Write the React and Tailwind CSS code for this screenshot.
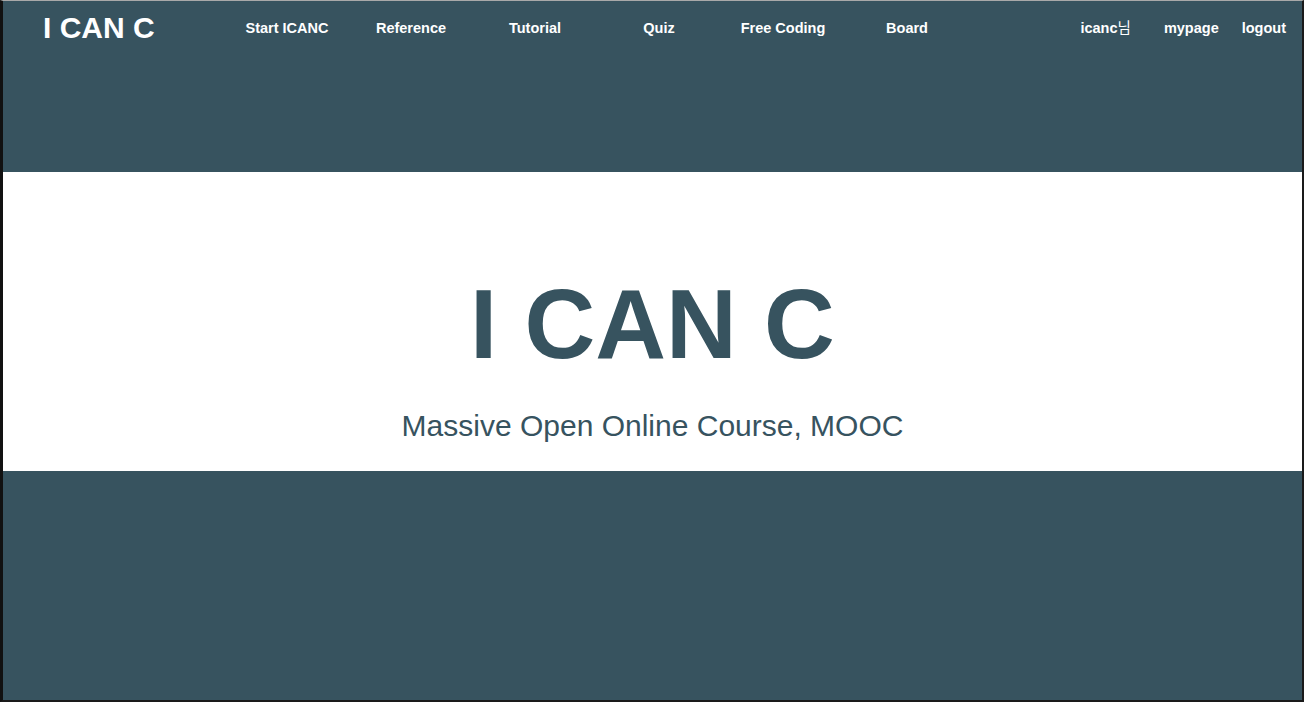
import React from 'react';

const navItems = ['Start ICANC', 'Reference', 'Tutorial', 'Quiz', 'Free Coding', 'Board'];

const App = () => {
  return (
    <div
      className="w-[1304px] h-[702px] flex flex-col bg-[#37535f] border-t border-t-[#a9a9a9] border-l-[3px] border-r-[2px] border-b-[2px] border-l-[#111111] border-r-[#1a1a1a] border-b-[#1a1a1a] overflow-hidden"
      style={{ fontFamily: '"Liberation Sans", Arial, "Noto Sans CJK KR", sans-serif' }}
    >
      {/* HEADER */}
      <header className="h-[171px] shrink-0 bg-[#37535f]">
        <div className="h-[53px] flex items-center">
          <div className="w-[222px] pl-[40px] text-white text-[30px] font-bold leading-none">I CAN C</div>

          <nav className="flex pt-[2px]">
            {navItems.map((item) => (
              <a key={item} className="w-[124px] text-center text-white text-[14.5px] font-bold cursor-pointer">
                {item}
              </a>
            ))}
          </nav>

          <div className="ml-auto flex items-center pt-[2px] pr-[16px] text-white text-[14.5px] font-bold">
            <span>
              icanc<span className="font-normal">님</span>
            </span>
            <a className="ml-[33px] cursor-pointer">mypage</a>
            <a className="ml-[23px] cursor-pointer">logout</a>
          </div>
        </div>
      </header>

      {/* HERO */}
      <section className="h-[299px] shrink-0 bg-white flex flex-col items-center pt-[103px]">
        <h1 className="text-[98px] font-bold leading-none text-[#37535f]">I CAN C</h1>
        <p className="mt-[38px] text-[30px] leading-none text-[#37535f]">Massive Open Online Course, MOOC</p>
      </section>

      <div className="flex-1 bg-[#37535f]" />
    </div>
  );
};

export default App;
